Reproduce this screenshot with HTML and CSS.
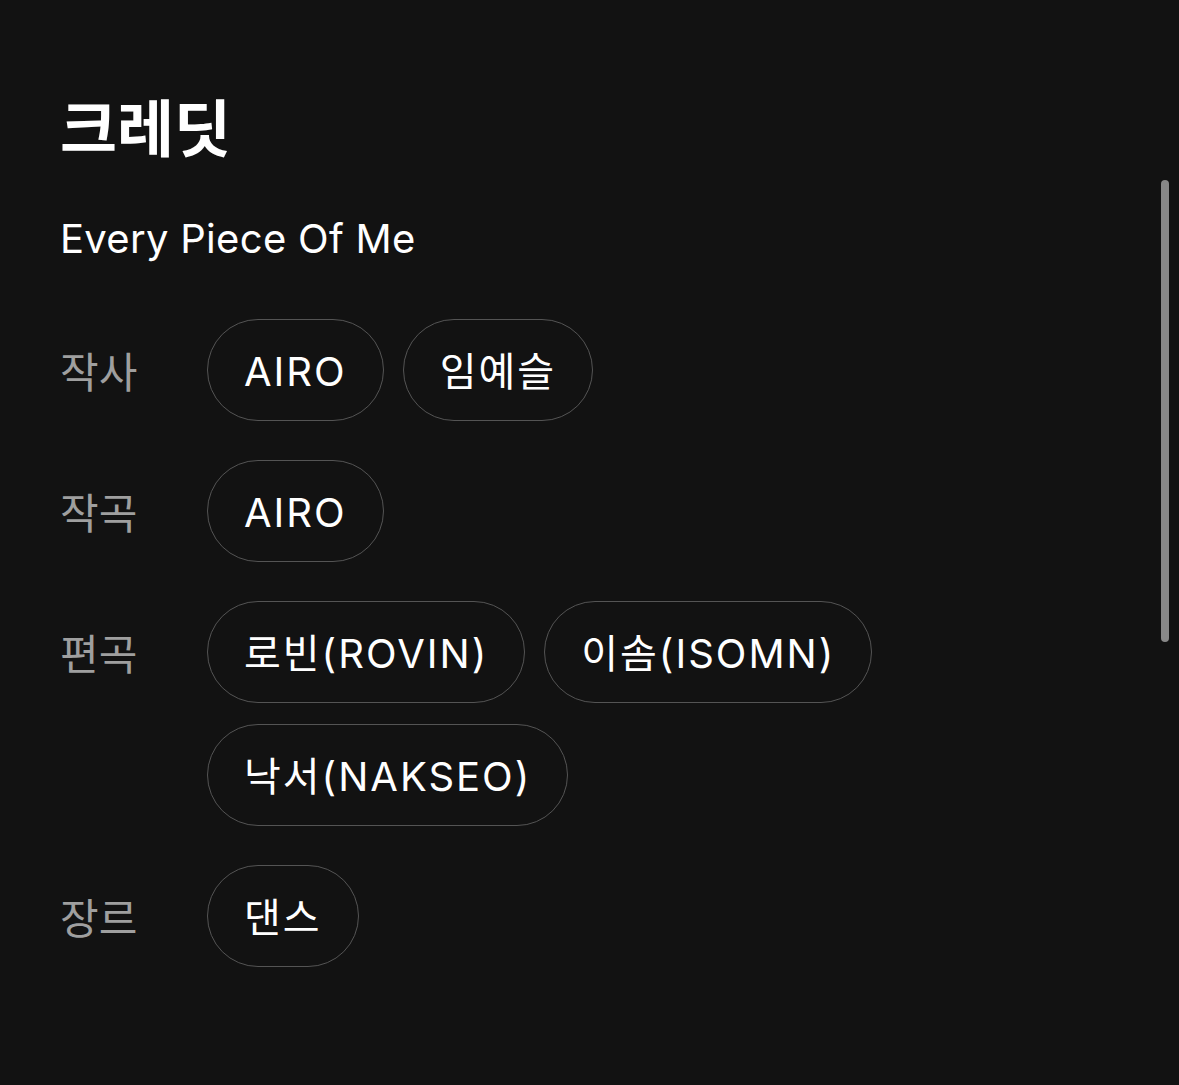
FILE: index.html
```html
<!DOCTYPE html>
<html lang="ko">
	<head>
		<meta charset="UTF-8">
		<title>크레딧</title>
		<link rel="stylesheet" href="styles.css">
	</head>
	<body>
		<div class="credits">
			<h1>크레딧</h1>
			<p class="song">Every Piece Of Me</p>
			<ul class="list">
				<li class="row">
					<strong>작사</strong>
					<div class="names">
						<span>AIRO</span>
						<span>임예슬</span>
					</div>
				</li>
				<li class="row">
					<strong>작곡</strong>
					<div class="names">
						<span>AIRO</span>
					</div>
				</li>
				<li class="row">
					<strong>편곡</strong>
					<div class="names">
						<span>로빈(ROVIN)</span>
						<span>이솜(ISOMN)</span>
						<span>낙서(NAKSEO)</span>
					</div>
				</li>
				<li class="row">
					<strong>장르</strong>
					<div class="names">
						<span>댄스</span>
					</div>
				</li>
			</ul>
		</div>
		<div class="scrollbar"></div>
	</body>
</html>
```

FILE: styles.css
```css
html,body,h1,p,ul,li{
	margin: 0;
	padding: 0;
}
body{
	background-color: #121212;
	color: #fff;
	font-family: Inter, "Noto Sans CJK KR", sans-serif;
	height: 1085px;
	overflow: hidden;
}
.credits{
	padding: 92px 60px 0;
}
h1{
	font-size: 62px;
	font-weight: 700;
	line-height: 76px;
}
.song{
	margin-top: 45px;
	font-size: 40px;
	letter-spacing: 0.3px;
	line-height: 52px;
}
.list{
	list-style: none;
	margin-top: 54px;
}
.row{
	display: flex;
	align-items: flex-start;
	margin-bottom: 39px;
}
.row strong{
	flex: none;
	width: 147px;
	height: 102px;
	font-weight: 400;
	font-size: 42px;
	line-height: 108px;
	color: #9f9f9f;
}
.names{
	display: flex;
	flex-wrap: wrap;
	gap: 21px 19px;
}
.names span{
	display: inline-block;
	height: 102px;
	line-height: 103px;
	padding: 0 36px;
	border: 1.5px solid #545454;
	border-radius: 51px;
	font-size: 40px;
	letter-spacing: 2px;
	box-sizing: border-box;
}
.scrollbar{
	position: absolute;
	top: 180px;
	left: 1161px;
	width: 8px;
	height: 462px;
	border-radius: 4px;
	background-color: #888;
}
```
